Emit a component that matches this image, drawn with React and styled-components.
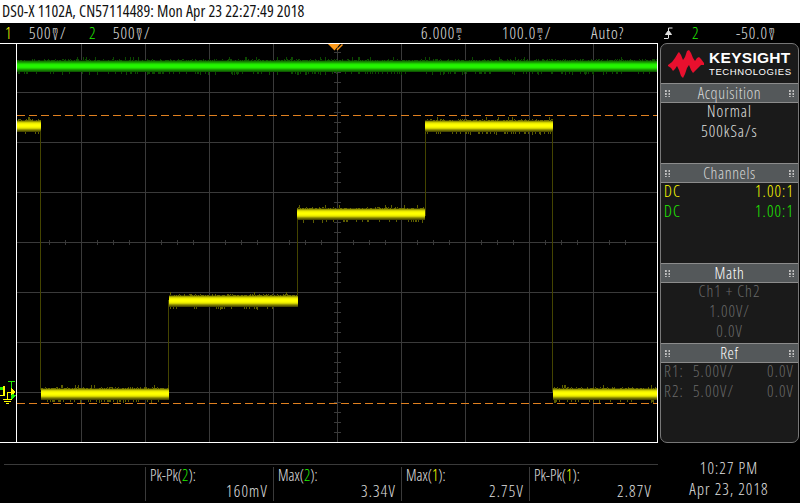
import React from 'react';
import styled, { createGlobalStyle } from 'styled-components';

const GlobalStyle = createGlobalStyle`
  html, body {
    margin: 0;
    padding: 0;
    background: #000;
  }
`;

const SCOPE_FONT = `"Open Sans", "Liberation Sans", sans-serif`;
const YELLOW = '#ffff00';
const GREEN = '#22ee00';

const Screen = styled.div`
  width: 800px;
  height: 503px;
  background: #000;
  color: #e2e2e2;
  font-family: ${SCOPE_FONT};
  font-stretch: 75%;
  font-size: 16px;
  font-weight: 300;
  overflow: hidden;
`;

const TitleBar = styled.div`
  height: 23px;
  background: #fff;
  color: #111;
  font-size: 16px;
  line-height: 23px;
  padding-left: 2px;
  font-weight: 400;
  letter-spacing: 0.08px;
`;

const StatusBar = styled.div`
  height: 20px;
  display: grid;
  grid-template-columns: 5px 24px 60px 24px 308px 81px 89px 73px 28px 44px auto;
  align-items: center;
  line-height: 20px;
  letter-spacing: 1px;
`;

const Cell = styled.div`
  grid-column: ${(p) => p.$col};
  display: flex;
  align-items: center;
  white-space: nowrap;
  color: ${(p) => p.$color || 'inherit'};
`;

// the scope prints its units as two letters stacked in one character cell
const Unit = styled.span`
  display: inline-block;
  width: 7.5px;
  margin: 0 1px 0 0;
  font-size: 8px;
  font-weight: 400;
  line-height: 7px;
  letter-spacing: 0;
  text-align: center;
  white-space: normal;
  word-break: break-all;
`;

const Main = styled.div`
  height: 400px;
  display: flex;
`;

const Gutter = styled.div`
  position: relative;
  width: 16px;
  box-sizing: border-box;
  border-top: 1px solid #fff;
  border-bottom: 1px solid #fff;
`;

const GutterIcon = styled.svg`
  position: absolute;
  left: 0;
  top: 336px;
`;

const PlotFrame = styled.div`
  width: 642px;
  height: 400px;
  box-sizing: border-box;
  border: 1px solid #fff;

  svg {
    display: block;
  }
`;

const Panel = styled.div`
  margin-left: 2px;
  width: 139px;
  height: 400px;
  box-sizing: border-box;
  border: 1px solid #777;
  border-radius: 7px;
  background: #1a1a1a;
  overflow: hidden;
  display: flex;
  flex-direction: column;
`;

const LogoRow = styled.div`
  height: 39px;
  display: flex;
  align-items: center;
  gap: 5px;
  padding-left: 7px;
`;

const LogoText = styled.div`
  font-family: "Liberation Sans", sans-serif;
  font-stretch: 100%;
  color: #fff;
  display: flex;
  flex-direction: column;
`;

const LogoMain = styled.span`
  font-size: 15.5px;
  font-weight: 700;
  line-height: 16px;
  letter-spacing: 0.3px;
`;

const LogoSub = styled.span`
  font-size: 9.5px;
  font-weight: 400;
  line-height: 11px;
  letter-spacing: 0.6px;
`;

const Header = styled.div`
  height: 20px;
  box-sizing: border-box;
  background: #54585a;
  border-top: 1px solid #8c8c8c;
  border-bottom: 1px solid #8c8c8c;
  display: flex;
  align-items: center;
  justify-content: space-between;
  padding: 0 4px;
  color: ${(p) => (p.$dim ? '#ffffff' : '#d8d8d8')};
  line-height: 16px;
  letter-spacing: 0.6px;
`;

const Grip = styled.span`
  width: 5px;
  height: 7px;
  background-image: radial-gradient(circle at 1px 1px, #c0c0c0 0.8px, transparent 1px);
  background-size: 3.5px 3px;
`;

const Body = styled.div`
  height: ${(p) => p.$h}px;
  flex: ${(p) => (p.$fill ? 1 : 'none')};
  color: ${(p) => p.$color || '#e2e2e2'};
`;

const CenterLine = styled.div`
  height: 20px;
  line-height: 16px;
  text-align: center;
  letter-spacing: 1px;
`;

const SplitLine = styled.div`
  height: 20px;
  line-height: 16px;
  display: flex;
  justify-content: space-between;
  padding: 0 4px 0 3px;
  letter-spacing: 1.1px;
  color: ${(p) => p.$color || 'inherit'};
`;

const RefLine = styled(SplitLine)`
  color: #6a6a6a;
  span:first-child {
    width: 29px;
  }
  span:nth-child(2) {
    flex: 1;
  }
`;

const Footer = styled.div`
  height: 60px;
  display: flex;
`;

const MeasureArea = styled.div`
  width: 654px;
  margin-left: 4px;
  padding-top: 21px;
`;

const MeasureRow = styled.div`
  border-top: 1px solid #3a3a3a;
  padding: 2px 0 0 141px;
  display: flex;
`;

const Measure = styled.div`
  width: 128px;
  height: 34px;
  box-sizing: border-box;
  border-left: 1px solid #3a3a3a;
  padding: 0 5px 0 4px;
  line-height: 17px;
  font-size: 15.5px;
`;

const MeasureValue = styled.div`
  text-align: right;
  font-size: 16px;
  line-height: 15px;
  letter-spacing: 1.2px;
`;

const Clock = styled.div`
  flex: 1;
  padding-top: 15px;
  text-align: center;
  line-height: 21px;
  letter-spacing: 1.1px;
`;

// small seeded generator so the noise comes out the same on every load
const makeRandom = (seed) => {
  let s = seed;
  return () => {
    s = (s * 1664525 + 1013904223) % 4294967296;
    return s / 4294967296;
  };
};

const Trace = ({ x1, x2, y, hue, seed }) => {
  const rand = makeRandom(seed);
  const rows = hue === 'green'
    ? ['#0e5a00', '#137c00', '#18a000', '#1ecc00', '#22ec00', '#24f400', '#24f400', '#22ec00', '#1ecc00', '#18a000', '#137c00', '#0e5a00']
    : ['#6e6e00', '#9a9a00', '#d0d000', '#eeee00', '#fbfb00', '#ffff00', '#fbfb00', '#eeee00', '#d0d000', '#9a9a00', '#6e6e00', '#4a4a00'];
  const spike = hue === 'green' ? '#0c4a00' : '#5c5c00';
  const spikes = [];
  for (let x = x1; x < x2; x += 1) {
    const a = rand();
    if (a < 0.22) spikes.push(<rect key={`t${x}`} x={x} y={y - 1 - (a < 0.05 ? 2 : 0)} width={1} height={a < 0.05 ? 3 : 1} fill={spike} />);
    const b = rand();
    if (b < 0.2) spikes.push(<rect key={`b${x}`} x={x} y={y + 12} width={1} height={b < 0.04 ? 3 : 1.5} fill={spike} />);
    if (rand() < 0.5) spikes.push(<rect key={`o${x}`} x={x} y={y} width={1} height={1} fill="#000" opacity={0.5} />);
  }
  return (
    <g>
      {rows.map((c, i) => (
        <rect key={i} x={x1} y={y + i} width={x2 - x1} height={1} fill={c} />
      ))}
      {spikes}
    </g>
  );
};

const range = (from, to, step) => {
  const out = [];
  for (let v = from; v <= to; v += step) out.push(v);
  return out;
};

const GRID = '#3a3a3a';
const EDGE = '#444400';

const Plot = () => (
  <svg width="640" height="398" viewBox="17 44 640 398" shapeRendering="crispEdges">
    {[81, 145, 209, 273, 337, 401, 465, 529, 593].map((x) => (
      <rect key={x} x={x} y={44} width={1} height={398} fill={GRID} />
    ))}
    {[92, 142, 192, 242, 292, 342, 392].map((y) => (
      <rect key={y} x={17} y={y} width={640} height={1} fill={GRID} />
    ))}
    {range(49, 625, 16).map((x) => (
      <rect key={x} x={x} y={240} width={1} height={5} fill={GRID} />
    ))}
    {range(52, 432, 10).map((y) => (
      <rect key={y} x={334} y={y} width={7} height={1} fill={GRID} />
    ))}

    <rect x={40} y={130} width={1} height={260} fill={EDGE} />
    <rect x={168} y={300} width={1} height={90} fill={EDGE} />
    <rect x={297} y={214} width={1} height={88} fill={EDGE} />
    <rect x={425} y={126} width={1} height={90} fill={EDGE} />
    <rect x={552} y={126} width={1} height={266} fill={EDGE} />

    <Trace x1={17} x2={657} y={60} hue="green" seed={7} />

    <line x1={17} x2={657} y1={115.5} y2={115.5} stroke="#e08020" strokeDasharray="8 4" />
    <line x1={17} x2={657} y1={403.5} y2={403.5} stroke="#e08020" strokeDasharray="8 4" />

    <Trace x1={17} x2={41} y={120} hue="yellow" seed={11} />
    <Trace x1={41} x2={169} y={388} hue="yellow" seed={23} />
    <Trace x1={169} x2={298} y={295} hue="yellow" seed={37} />
    <Trace x1={297} x2={425} y={208} hue="yellow" seed={41} />
    <Trace x1={425} x2={553} y={120} hue="yellow" seed={53} />
    <Trace x1={553} x2={657} y={388} hue="yellow" seed={67} />

    <g shapeRendering="auto">
      <path d="M328 44 L340 44 L334.5 50.5 Z" fill="#ff9a1a" />
      <path d="M337 50 L342.5 44.5" stroke="#ff9a1a" strokeWidth="1.4" fill="none" />
    </g>
  </svg>
);

const GroundMarks = () => (
  <GutterIcon width="16" height="30" viewBox="0 380 16 30" shapeRendering="crispEdges">
    <rect x={8} y={381} width={7} height={1} fill={GREEN} />
    <rect x={11} y={381} width={1} height={12} fill={GREEN} />
    <path d="M11 388 L16 392 L11 396 Z" fill={YELLOW} />
    <path d="M11 400 L16 395 L12 394 L11 396 Z" fill={GREEN} />
    <path d="M3 386 h2 v10 h-5 v-1 h3 z" fill={YELLOW} />
    <path d="M0 387 h3 v3 h-3 z" fill={GREEN} />
    <path d="M7 399 v-7 h4 v1 h-3 v6 z" fill={YELLOW} />
    <rect x={3} y={399} width={9} height={1} fill={YELLOW} />
    <rect x={4} y={401} width={7} height={1} fill={YELLOW} />
    <rect x={6} y={403} width={3} height={1} fill={YELLOW} />
  </GutterIcon>
);

const TriggerIcon = () => (
  <svg width="9" height="12" viewBox="0 0 9 12" fill="none" stroke="#e2e2e2" strokeWidth="1">
    <path d="M4.5 11 V1 H8.5" />
    <path d="M0 11.5 H4.5" />
    <path d="M1.5 7.5 L4.5 3.5 L7.5 7.5 Z" fill="#e2e2e2" />
  </svg>
);

const KeysightWave = () => (
  <svg width="36" height="28" viewBox="0 0 36 28">
    <path
      d="M0 15 L4 12 L7 8 L10 3 L11 2 L13 5 L15 10 L17 7 L19 1 L21 0 L23 3 L25 8 L27 11 L29 8 L31 7 L33 9 L36 13 L36 15 L33 15 L31 17 L29 19 L27 21 L25 23 L23 20 L21 15 L19 18 L17 24 L15 28 L13 26 L11 20 L9 16 L7 19 L5 21 L3 18 L0 16 Z"
      fill="#e8102e"
    />
  </svg>
);

const PanelHeader = ({ children, bright }) => (
  <Header $dim={bright}>
    <Grip />
    <span>{children}</span>
    <Grip />
  </Header>
);

const Colored = styled.span`
  color: ${(p) => p.$color};
`;

const measures = [
  { name: 'Pk-Pk', ch: 2, value: '160mV' },
  { name: 'Max', ch: 2, value: '3.34V' },
  { name: 'Max', ch: 1, value: '2.75V' },
  { name: 'Pk-Pk', ch: 1, value: '2.87V' },
];

const App = () => (
  <Screen>
    <GlobalStyle />
    <TitleBar>DS0-X 1102A, CN57114489: Mon Apr 23 22:27:49 2018</TitleBar>
    <StatusBar>
      <Cell $col={2} $color={YELLOW}>1</Cell>
      <Cell $col={3}>500<Unit>mV</Unit>/</Cell>
      <Cell $col={4} $color={GREEN}>2</Cell>
      <Cell $col={5}>500<Unit>mV</Unit>/</Cell>
      <Cell $col={6}>6.000<Unit>ms</Unit></Cell>
      <Cell $col={7}>100.0<Unit>ms</Unit>/</Cell>
      <Cell $col={8}>Auto?</Cell>
      <Cell $col={9}><TriggerIcon /></Cell>
      <Cell $col={10} $color={GREEN}>2</Cell>
      <Cell $col={11}>-50.0<Unit>mV</Unit></Cell>
    </StatusBar>
    <Main>
      <Gutter>
        <GroundMarks />
      </Gutter>
      <PlotFrame>
        <Plot />
      </PlotFrame>
      <Panel>
        <LogoRow>
          <KeysightWave />
          <LogoText>
            <LogoMain>KEYSIGHT</LogoMain>
            <LogoSub>TECHNOLOGIES</LogoSub>
          </LogoText>
        </LogoRow>
        <PanelHeader>Acquisition</PanelHeader>
        <Body $h={60}>
          <CenterLine>Normal</CenterLine>
          <CenterLine>500kSa/s</CenterLine>
        </Body>
        <PanelHeader>Channels</PanelHeader>
        <Body $h={80}>
          <SplitLine $color={YELLOW}><span>DC</span><span>1.00:1</span></SplitLine>
          <SplitLine $color={GREEN}><span>DC</span><span>1.00:1</span></SplitLine>
        </Body>
        <PanelHeader bright>Math</PanelHeader>
        <Body $h={60} $color="#6a6a6a">
          <CenterLine>Ch1 + Ch2</CenterLine>
          <CenterLine>1.00V/</CenterLine>
          <CenterLine>0.0V</CenterLine>
        </Body>
        <PanelHeader bright>Ref</PanelHeader>
        <Body $fill>
          <RefLine><span>R1:</span><span>5.00V/</span><span>0.0V</span></RefLine>
          <RefLine><span>R2:</span><span>5.00V/</span><span>0.0V</span></RefLine>
        </Body>
      </Panel>
    </Main>
    <Footer>
      <MeasureArea>
        <MeasureRow>
          {measures.map((m) => (
            <Measure key={`${m.name}${m.ch}`}>
              <div>
                {m.name}(<Colored $color={m.ch === 1 ? YELLOW : GREEN}>{m.ch}</Colored>):
              </div>
              <MeasureValue>{m.value}</MeasureValue>
            </Measure>
          ))}
        </MeasureRow>
      </MeasureArea>
      <Clock>
        <div>10:27 PM</div>
        <div>Apr 23, 2018</div>
      </Clock>
    </Footer>
  </Screen>
);

export default App;
